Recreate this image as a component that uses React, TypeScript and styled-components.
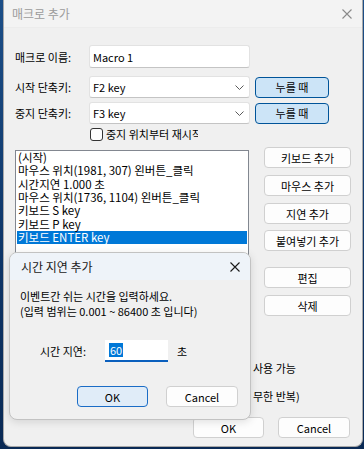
import React from 'react';
import styled, { createGlobalStyle } from 'styled-components';

const Global = createGlobalStyle`
  html, body { margin: 0; padding: 0; width: 364px; height: 449px; overflow: hidden; background: #123e72; }
  body { font-family: "Noto Sans CJK KR", "Noto Sans", sans-serif; font-size: 11px; color: #000; }
  * { box-sizing: border-box; }
`;

const Desktop = styled.div`
  width: 364px;
  height: 449px;
  padding-left: 3px;
  background: linear-gradient(180deg, #1d4f88 0%, #0d3466 60%, #0a2a55 100%);
`;

const Window = styled.div`
  position: relative;
  width: 360px;
  height: 447px;
  background: #f0f0f0;
  border: 1px solid #a9a9a9;
  border-top: none;
  border-radius: 0 0 8px 8px;
  overflow: hidden;
  display: flex;
  flex-direction: column;
`;

const TitleBar = styled.div`
  height: 28px;
  flex: none;
  display: flex;
  align-items: center;
  justify-content: space-between;
  padding: 0 10px 0 8px;
  background: #f3f3f3;
  border-bottom: 1px solid #ececec;
  color: #9b9b9b;
  font-size: 12px;
`;

const Body = styled.div`
  display: flex;
  flex-direction: column;
  padding: 16px 11px 0 11px;
`;

const FieldRow = styled.div<{ $mt?: number; $h: number }>`
  display: flex;
  align-items: center;
  height: ${(p) => p.$h}px;
  margin-top: ${(p) => p.$mt ?? 0}px;
`;

const Label = styled.div`
  width: 74px;
  flex: none;
  white-space: nowrap;
`;

const TextBox = styled.div<{ $h: number }>`
  width: 161px;
  height: ${(p) => p.$h}px;
  display: flex;
  align-items: center;
  justify-content: space-between;
  background: #fff;
  border: 1px solid #e2e2e2;
  border-bottom-color: #c4c4c4;
  border-radius: 3px;
  padding: 0 5px 0 3px;
`;

const PressButton = styled.div`
  margin-left: 5px;
  width: 74px;
  height: 21px;
  display: flex;
  align-items: center;
  justify-content: center;
  background: #cce4f7;
  border: 1px solid #005499;
  border-radius: 4px;
`;

const CheckRow = styled.div`
  display: flex;
  align-items: center;
  height: 14px;
  margin-top: 3px;
  padding-left: 75px;
`;

const CheckBox = styled.div`
  width: 13px;
  height: 13px;
  border: 1px solid #333;
  border-radius: 3px;
  background: #fdfdfd;
  margin-right: 3px;
  flex: none;
`;

const CheckLabel = styled.div`
  width: 92px;
  overflow: hidden;
  white-space: nowrap;
`;

const MainArea = styled.div`
  display: flex;
  margin-top: 6px;
`;

const ListBox = styled.div`
  width: 235px;
  height: 172px;
  margin-top: 3px;
  background: #fff;
  border: 1px solid #828790;
  padding: 0 1px;
  font-size: 11.5px;
`;

const ListItem = styled.div<{ $sel?: boolean }>`
  height: 13.33px;
  line-height: 13.33px;
  padding-left: 1px;
  white-space: nowrap;
  background: ${(p) => (p.$sel ? '#0078d7' : 'transparent')};
  color: ${(p) => (p.$sel ? '#fff' : '#000')};
`;

const SideColumn = styled.div`
  display: flex;
  flex-direction: column;
  margin-left: 15px;
  width: 87px;
`;

const PushButton = styled.div<{ $w?: number; $mt?: number; $primary?: boolean }>`
  width: ${(p) => p.$w ?? 87}px;
  height: 21px;
  margin-top: ${(p) => p.$mt ?? 0}px;
  display: flex;
  align-items: center;
  justify-content: center;
  background: ${(p) => (p.$primary ? '#e0ecf8' : '#fdfdfd')};
  border: 1px solid ${(p) => (p.$primary ? '#1a6cc6' : '#d0d0d0')};
  border-radius: 4px;
  flex: none;
`;

const LowerText = styled.div<{ $mt: number }>`
  height: 14px;
  line-height: 14px;
  margin-top: ${(p) => p.$mt}px;
  padding-left: 238px;
  white-space: nowrap;
`;

const BottomButtons = styled.div`
  display: flex;
  justify-content: flex-end;
  gap: 14px;
  margin-top: 14px;
  padding-right: 1px;
`;

const Dialog = styled.div`
  position: absolute;
  left: 5px;
  top: 252px;
  width: 242px;
  height: 168px;
  background: #f0f0f0;
  border: 1px solid #c2c2c2;
  border-radius: 8px;
  overflow: hidden;
  box-shadow: 0 2px 8px rgba(0, 0, 0, 0.12);
  display: flex;
  flex-direction: column;
`;

const DialogTitle = styled.div`
  height: 27px;
  flex: none;
  display: flex;
  align-items: center;
  justify-content: space-between;
  padding: 0 10px 0 11px;
  background: #eef3f9;
  font-size: 12px;
  color: #1a1a1a;
`;

const DialogBody = styled.div`
  display: flex;
  flex-direction: column;
  padding: 9px 10px 0 10px;
`;

const Message = styled.div`
  line-height: 15px;
  white-space: nowrap;
`;

const DelayRow = styled.div`
  display: flex;
  align-items: center;
  height: 22px;
  margin-top: 21px;
`;

const DelayLabel = styled.div`
  width: 85px;
  padding-left: 20px;
  flex: none;
`;

const DelayInput = styled.div`
  width: 63px;
  height: 22px;
  background: #fff;
  border-bottom: 2px solid #0a5fbd;
  display: flex;
  align-items: center;
  padding-left: 4px;
`;

const Selection = styled.span`
  background: #0078d7;
  color: #fff;
  line-height: 14px;
  padding: 0 1px;
`;

const Unit = styled.div`
  margin-left: 9px;
`;

const DialogButtons = styled.div`
  display: flex;
  justify-content: flex-end;
  gap: 18px;
  margin-top: 24px;
  padding-right: 2px;
`;

const CloseIcon = ({ color }: { color: string }) => (
  <svg width="10" height="10" viewBox="0 0 10 10">
    <path d="M0.5 0.5 L9.5 9.5 M9.5 0.5 L0.5 9.5" stroke={color} strokeWidth="1.1" fill="none" />
  </svg>
);

const Chevron = () => (
  <svg width="9" height="5" viewBox="0 0 9 5">
    <path d="M0.5 0.5 L4.5 4.5 L8.5 0.5" stroke="#5a5a5a" strokeWidth="1" fill="none" />
  </svg>
);

const items = [
  '(시작)',
  '마우스 위치(1981, 307) 왼버튼_클릭',
  '시간지연 1.000 초',
  '마우스 위치(1736, 1104) 왼버튼_클릭',
  '키보드 S key',
  '키보드 P key',
  '키보드 ENTER key',
];

export default function App() {
  return (
    <Desktop>
      <Global />
      <Window>
        <TitleBar>
          <span>매크로 추가</span>
          <CloseIcon color="#8a8a8a" />
        </TitleBar>
        <Body>
          <FieldRow $h={23} $mt={1}>
            <Label>매크로 이름:</Label>
            <TextBox $h={23}>Macro 1</TextBox>
          </FieldRow>
          <FieldRow $h={22} $mt={8}>
            <Label>시작 단축키:</Label>
            <TextBox $h={22}>
              <span>F2 key</span>
              <Chevron />
            </TextBox>
            <PressButton>누를 때</PressButton>
          </FieldRow>
          <FieldRow $h={22} $mt={4}>
            <Label>중지 단축키:</Label>
            <TextBox $h={22}>
              <span>F3 key</span>
              <Chevron />
            </TextBox>
            <PressButton>누를 때</PressButton>
          </FieldRow>
          <CheckRow>
            <CheckBox />
            <CheckLabel>중지 위치부터 재시작</CheckLabel>
          </CheckRow>
          <MainArea>
            <ListBox>
              {items.map((t, i) => (
                <ListItem key={i} $sel={i === items.length - 1}>
                  {t}
                </ListItem>
              ))}
            </ListBox>
            <SideColumn>
              <PushButton>키보드 추가</PushButton>
              <PushButton $mt={7}>마우스 추가</PushButton>
              <PushButton $mt={7}>지연 추가</PushButton>
              <PushButton $mt={6}>붙여넣기 추가</PushButton>
              <PushButton $mt={16}>편집</PushButton>
              <PushButton $mt={7}>삭제</PushButton>
            </SideColumn>
          </MainArea>
          <LowerText $mt={39}>사용 가능</LowerText>
          <LowerText $mt={14}>무한 반복)</LowerText>
          <BottomButtons>
            <PushButton $w={71}>OK</PushButton>
            <PushButton $w={72}>Cancel</PushButton>
          </BottomButtons>
        </Body>
        <Dialog>
          <DialogTitle>
            <span>시간 지연 추가</span>
            <CloseIcon color="#1a1a1a" />
          </DialogTitle>
          <DialogBody>
            <Message>이벤트간 쉬는 시간을 입력하세요.</Message>
            <Message>(입력 범위는 0.001 ~ 86400 초 입니다)</Message>
            <DelayRow>
              <DelayLabel>시간 지연:</DelayLabel>
              <DelayInput>
                <Selection>60</Selection>
              </DelayInput>
              <Unit>초</Unit>
            </DelayRow>
            <DialogButtons>
              <PushButton $w={71} $primary>OK</PushButton>
              <PushButton $w={72}>Cancel</PushButton>
            </DialogButtons>
          </DialogBody>
        </Dialog>
      </Window>
    </Desktop>
  );
}
